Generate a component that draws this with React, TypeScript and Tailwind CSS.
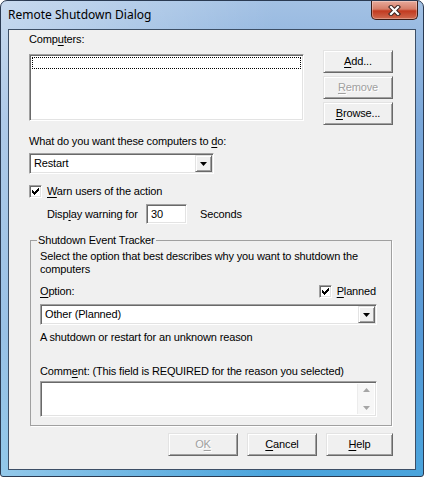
import { FC, ReactNode } from 'react';

const raised =
  'border border-t-[#e3e3e3] border-l-[#e3e3e3] border-r-[#696969] border-b-[#696969] bg-[#f0f0f0] shadow-[inset_1px_1px_0_#fff,inset_-1px_-1px_0_#a0a0a0]';
const sunken =
  'border border-t-[#a0a0a0] border-l-[#a0a0a0] border-r-white border-b-white bg-white shadow-[inset_1px_1px_0_#696969,inset_-1px_-1px_0_#e3e3e3]';

const U: FC<{ children: ReactNode }> = ({ children }) => (
  <span className="underline underline-offset-[2px]">{children}</span>
);

const Btn: FC<{ children: ReactNode; disabled?: boolean; className?: string }> = ({
  children,
  disabled,
  className = 'w-[70px]',
}) => (
  <div
    className={`${raised} ${className} h-[23px] flex items-center justify-center ${
      disabled ? 'text-[#a0a0a0] [text-shadow:1px_1px_0_#fff]' : 'text-black'
    }`}
  >
    {children}
  </div>
);

const Combo: FC<{ value: string; className: string }> = ({ value, className }) => (
  <div className={`${sunken} ${className} h-[21px] p-[1px] flex items-stretch`}>
    <div className="flex-1 pl-[3px] flex items-center">{value}</div>
    <div className={`${raised} w-[17px] flex items-center justify-center`}>
      <svg width="7" height="4" viewBox="0 0 7 4">
        <path d="M0 0h7L3.5 4z" fill="#000" />
      </svg>
    </div>
  </div>
);

const Check: FC = () => (
  <div className={`${sunken} w-[13px] h-[13px] shrink-0 flex items-center justify-center`}>
    <svg width="7" height="7" viewBox="0 0 7 7" shapeRendering="crispEdges">
      <rect x="0" y="2" width="1" height="3" fill="#000" />
      <rect x="1" y="3" width="1" height="3" fill="#000" />
      <rect x="2" y="4" width="1" height="3" fill="#000" />
      <rect x="3" y="3" width="1" height="3" fill="#000" />
      <rect x="4" y="2" width="1" height="3" fill="#000" />
      <rect x="5" y="1" width="1" height="3" fill="#000" />
      <rect x="6" y="0" width="1" height="3" fill="#000" />
    </svg>
  </div>
);

export default function App() {
  return (
    <div
      className="w-[424px] h-[477px] overflow-hidden text-[11px] leading-[13px] tracking-[-0.15px] text-black"
      style={{ fontFamily: '"Liberation Sans", Arial, sans-serif' }}
    >
      <div className="w-full h-full rounded-t-[7px] rounded-b-[3px] border border-[#2a3a52] bg-[linear-gradient(to_right,rgba(255,255,255,0.4),rgba(255,255,255,0)_65%),linear-gradient(to_bottom,#a3c1e4,#7aa7d9_25%,#5699d6_70%,#4aa4dc)] flex flex-col">
        {/* title bar */}
        <div className="h-[28px] flex items-start justify-between">
          <div
            className="pl-[7px] pt-[6px] text-[12px] leading-[16px] tracking-normal text-black"
            style={{ fontFamily: '"Noto Sans", "Open Sans", sans-serif' }}
          >
            Remote Shutdown Dialog
          </div>
          <div className="mr-[5px] w-[47px] h-[19px] rounded-b-[5px] border border-t-0 border-[#3b1c17] bg-[linear-gradient(to_bottom,#e7aa9b,#d57d68_45%,#c23a20_55%,#cf6a50)] shadow-[inset_0_0_0_1px_rgba(255,255,255,0.3)] flex items-center justify-center">
            <svg width="13" height="11" viewBox="0 0 13 11">
              <path d="M3 2L10 9M10 2L3 9" stroke="#3a2320" strokeWidth="4.2" strokeLinecap="square" />
              <path d="M3 2L10 9M10 2L3 9" stroke="#fff" strokeWidth="2.2" strokeLinecap="square" />
            </svg>
          </div>
        </div>

        {/* client area */}
        <div className="ml-[7px] mr-[7px] h-[441px] border border-[#3d4f66] bg-[#f0f0f0] pl-[20px] pr-[22px] pt-[3px] flex flex-col">
          <div className="flex justify-between">
            <div className="flex flex-col">
              <div>
                Comp<U>u</U>ters:
              </div>
              <div className={`${sunken} mt-[8px] w-[275px] h-[67px] p-[2px]`}>
                <div className="h-[12px] border border-dotted border-black" />
              </div>
            </div>
            <div className="pt-[17px] flex flex-col gap-[3px]">
              <Btn>
                <U>A</U>dd...
              </Btn>
              <Btn disabled>
                <U>R</U>emove
              </Btn>
              <Btn>
                <U>B</U>rowse...
              </Btn>
            </div>
          </div>

          <div className="mt-[10px]">
            What do you want these computers to <U>d</U>o:
          </div>
          <Combo value="Restart" className="mt-[5px] w-[185px]" />

          <div className="mt-[11px] flex items-center h-[13px] gap-[5px]">
            <Check />
            <span>
              <U>W</U>arn users of the action
            </span>
          </div>
          <div className="mt-[6px] ml-[18px] flex items-center">
            <span className="w-[99px]">
              Disp<U>l</U>ay warning for
            </span>
            <div className={`${sunken} w-[41px] h-[20px] pl-[4px] flex items-center`}>30</div>
            <span className="ml-[13px]">Seconds</span>
          </div>

          <fieldset className="mt-[10px] mx-[1px] p-0 border border-[#a0a0a0] shadow-[1px_1px_0_#fff]">
            <legend className="ml-[6px] px-[1px] leading-[13px]">Shutdown Event Tracker</legend>
            <div className="pl-[9px] pr-[14px] pt-[3px] pb-[8px] flex flex-col">
              <div>
                Select the option that best describes why you want to shutdown the
                <br />
                computers
              </div>
              <div className="mt-[9px] h-[13px] flex items-center justify-between">
                <span>
                  <U>O</U>ption:
                </span>
                <div className="flex items-center gap-[5px] pr-[1px]">
                  <Check />
                  <span>
                    <U>P</U>lanned
                  </span>
                </div>
              </div>
              <Combo value="Other (Planned)" className="mt-[6px] w-full" />
              <div className="mt-[6px]">A shutdown or restart for an unknown reason</div>
              <div className="mt-[21px]">
                Comm<U>e</U>nt: (This field is REQUIRED for the reason you selected)
              </div>
              <div className={`${sunken} mt-[3px] h-[36px] p-[2px] flex justify-end`}>
                <div className="w-[17px] bg-[#f7f7f7] border-l border-[#ececec] flex flex-col items-center justify-between py-[4px]">
                  <svg width="7" height="4" viewBox="0 0 7 4">
                    <path d="M3.5 0L7 4H0z" fill="#a6a6a6" />
                  </svg>
                  <svg width="7" height="4" viewBox="0 0 7 4">
                    <path d="M0 0h7L3.5 4z" fill="#a6a6a6" />
                  </svg>
                </div>
              </div>
            </div>
          </fieldset>

          <div className="mt-[7px] flex justify-end gap-[9px]">
            <Btn disabled>
              O<U>K</U>
            </Btn>
            <Btn>
              <U>C</U>ancel
            </Btn>
            <Btn className="w-[67px]">
              <U>H</U>elp
            </Btn>
          </div>
        </div>
      </div>
    </div>
  );
}
